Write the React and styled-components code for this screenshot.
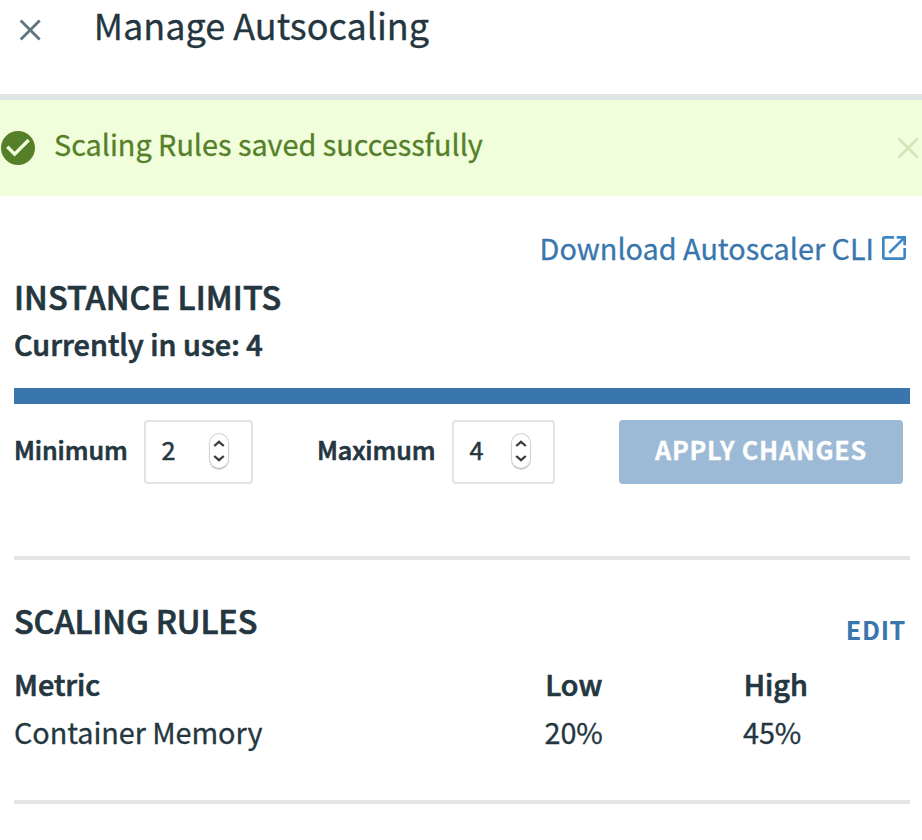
import React from "react";
import styled, { createGlobalStyle } from "styled-components";

const GlobalStyle = createGlobalStyle`
  * { box-sizing: border-box; }
  body {
    margin: 0;
    background: #fff;
    color: #243640;
    font-family: "Noto Sans CJK SC", "Noto Sans", sans-serif;
    font-size: 28.8px;
    line-height: 47px;
    -webkit-text-stroke: 0.3px;
  }
`;

const Page = styled.div`
  height: 840px;
`;

const Header = styled.header`
  display: flex;
  height: 100px;
  padding-left: 18.7px;
  border-bottom: 6px solid #dfe3e4;
`;

const Title = styled.h1`
  margin: 0 0 0 53px;
  font-size: 36px;
  font-weight: 400;
  line-height: 48px;
  white-space: nowrap;
`;

const IconButton = styled.button`
  display: flex;
  flex: none;
  width: 22px;
  height: 22px;
  margin-top: ${(p) => p.$top}px;
  padding: 0;
  border: 0;
  background: none;
  color: ${(p) => p.$color};
`;

const Alert = styled.div`
  display: flex;
  height: 96px;
  padding: 20px 3px 0 1px;
  background: #f0fedb;
  color: #567f29;
`;

const AlertIcon = styled.svg`
  flex: none;
  width: 34px;
  height: 34px;
  margin-top: 11px;
`;

const AlertText = styled.span`
  flex: 1;
  margin-left: 19px;
`;

const Content = styled.main`
  padding: 28px 12px 0 14px;
`;

const LinkRow = styled.div`
  display: flex;
  justify-content: flex-end;
  padding-right: 4px;
`;

const Link = styled.a`
  display: flex;
  color: #3876ad;
`;

const LinkIcon = styled.svg`
  width: 24px;
  height: 24px;
  margin: 12px 0 0 8px;
`;

const SectionTitle = styled.h2`
  margin: ${(p) => p.$top}px 0 0;
  font-size: 32.4px;
  font-weight: 500;
  line-height: 47px;
  letter-spacing: ${(p) => p.$spacing}px;
  -webkit-text-stroke: 0.7px;
`;

const Usage = styled.p`
  margin: 1px 0 0;
  font-weight: 500;
  letter-spacing: 0.04px;
  -webkit-text-stroke: 0.7px;
`;

const Meter = styled.div`
  height: 16px;
  margin-top: 21px;
  background: #3876ad;
`;

const LimitsForm = styled.div`
  display: flex;
  height: 64px;
  margin-top: 16px;
  font-size: 25.2px;
  line-height: 58px;
`;

const Label = styled.label`
  width: ${(p) => p.$width}px;
  font-weight: 500;
  letter-spacing: -0.1px;
  -webkit-text-stroke: 0.7px;
`;

const NumberField = styled.div`
  display: flex;
  width: ${(p) => p.$width}px;
  margin-right: 64px;
  padding-left: 15px;
  border: 2px solid #dfe4e8;
  border-radius: 4px;
  line-height: 54px;
`;

const Value = styled.span`
  width: ${(p) => p.$width}px;
  padding-left: 0.6px;
  -webkit-text-stroke: 0.5px;
`;

const Stepper = styled.div`
  display: flex;
  flex-direction: column;
  justify-content: center;
  align-items: center;
  gap: 8px;
  width: 20px;
  height: 36px;
  margin-top: 11px;
  border: 1px solid #d2d2d2;
  border-bottom-color: #b8b8b8;
  border-radius: 10px;
  background: #fff;
  box-shadow: 0 1px 1px rgba(0, 0, 0, 0.14);
`;

const Arrow = styled.svg`
  display: block;
  width: 12px;
  height: 7px;
  transform: ${(p) => (p.$down ? "scaleY(-1)" : "none")};
`;

const ApplyButton = styled.button`
  width: 284px;
  height: 64px;
  padding: 0 0 6px;
  border: 0;
  border-radius: 4px;
  background: #9cbad6;
  color: #fff;
  font-family: inherit;
  font-size: 25.2px;
  font-weight: 700;
  line-height: 58px;
  letter-spacing: 0.76px;
`;

const Rule = styled.hr`
  height: 4px;
  margin: ${(p) => p.$top}px 0 0;
  border: 0;
  background: #e5e5e5;
`;

const SectionHeader = styled.div`
  display: flex;
  justify-content: space-between;
  height: 64px;
  padding-right: 4px;
  margin-top: 36px;
`;

const EditLink = styled.a`
  margin-top: 15px;
  color: #3876ad;
  font-size: 25.2px;
  font-weight: 700;
  line-height: 36px;
  letter-spacing: 0.65px;
  -webkit-text-stroke: 0;
`;

const RuleRow = styled.div`
  display: grid;
  grid-template-columns: ${(p) => (p.$head ? "531.2px 198.5px 1fr" : "530.5px 198.5px 1fr")};
  margin-top: ${(p) => (p.$head ? 0 : 1)}px;
  font-weight: ${(p) => (p.$head ? 500 : 400)};
  letter-spacing: ${(p) => (p.$head ? 0 : -0.06)}px;
  -webkit-text-stroke: ${(p) => (p.$head ? 0.7 : 0.3)}px;
`;

function Close() {
  return (
    <svg width="22" height="22" viewBox="0 0 22 22" fill="none" stroke="currentColor" strokeWidth="2.8">
      <path d="M1.7 1.5 20.7 20.5M20.7 1.5 1.7 20.5" />
    </svg>
  );
}

function Chevron({ down }) {
  return (
    <Arrow $down={down} viewBox="0 0 12 7" fill="none" stroke="#3d3d3d" strokeWidth="2.3">
      <path d="M1.2 6 6 1.8 10.8 6" />
    </Arrow>
  );
}

function NumberInput({ value, width, valueWidth }) {
  return (
    <NumberField $width={width}>
      <Value $width={valueWidth}>{value}</Value>
      <Stepper>
        <Chevron />
        <Chevron down />
      </Stepper>
    </NumberField>
  );
}

export default function App() {
  return (
    <Page>
      <GlobalStyle />
      <Header>
        <IconButton $top={19} $color="#607580" aria-label="Close">
          <Close />
        </IconButton>
        <Title>Manage Autsocaling</Title>
      </Header>
      <Alert>
        <AlertIcon viewBox="2 2 20 20" fill="currentColor">
          <path d="M12 2a10 10 0 1 0 0 20 10 10 0 0 0 0-20zm-2 15-5-5 1.41-1.41L10 14.17l7.59-7.59L19 8z" />
        </AlertIcon>
        <AlertText>Scaling Rules saved successfully</AlertText>
        <IconButton $top={17} $color="#d3e5ba" aria-label="Dismiss">
          <Close />
        </IconButton>
      </Alert>
      <Content>
        <LinkRow>
          <Link>
            Download Autoscaler CLI
            <LinkIcon viewBox="3 3 18 18" fill="#3d87c5">
              <path d="M19 19H5V5h7V3H5a2 2 0 0 0-2 2v14a2 2 0 0 0 2 2h14c1.1 0 2-.9 2-2v-7h-2v7zM14 3v2h3.59l-9.83 9.83 1.41 1.41L19 6.41V10h2V3h-7z" />
            </LinkIcon>
          </Link>
        </LinkRow>
        <SectionTitle $top={1} $spacing={0.1}>INSTANCE LIMITS</SectionTitle>
        <Usage>Currently in use: 4</Usage>
        <Meter />
        <LimitsForm>
          <Label $width={130}>Minimum</Label>
          <NumberInput value="2" width={109} valueWidth={48} />
          <Label $width={135}>Maximum</Label>
          <NumberInput value="4" width={103} valueWidth={42} />
          <ApplyButton>APPLY CHANGES</ApplyButton>
        </LimitsForm>
        <Rule $top={72} />
        <SectionHeader>
          <SectionTitle $top={0} $spacing={-0.12}>SCALING RULES</SectionTitle>
          <EditLink>EDIT</EditLink>
        </SectionHeader>
        <RuleRow $head>
          <span>Metric</span>
          <span>Low</span>
          <span>High</span>
        </RuleRow>
        <RuleRow>
          <span>Container Memory</span>
          <span>20%</span>
          <span>45%</span>
        </RuleRow>
        <Rule $top={45} />
      </Content>
    </Page>
  );
}
